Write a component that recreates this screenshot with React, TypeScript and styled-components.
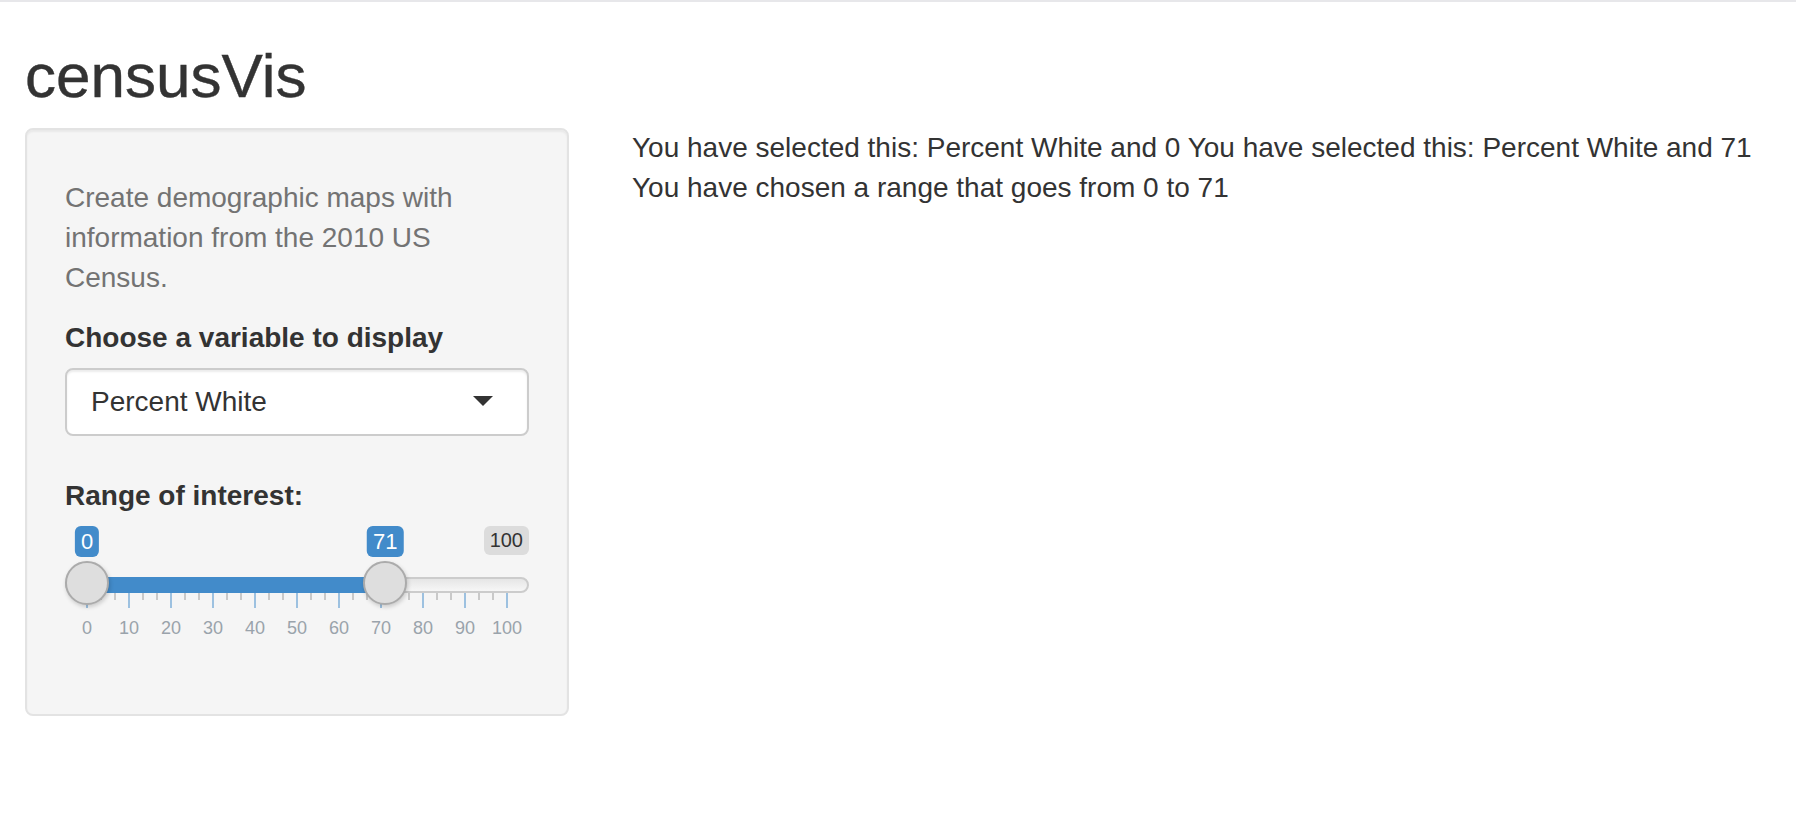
import React from "react";
import styled, { createGlobalStyle } from "styled-components";

const GlobalStyle = createGlobalStyle`
  html, body {
    margin: 0;
    padding: 0;
    background: #ffffff;
  }
  body {
    font-family: "Liberation Sans", Arial, Helvetica, sans-serif;
    color: #333333;
    font-size: 28px;
    line-height: 40px;
  }
  *, *::before, *::after {
    box-sizing: border-box;
  }
`;

const Page = styled.div`
  border-top: 2px solid #e7e7ea;
  padding: 0 30px 0 25px;
`;

const Title = styled.h2`
  margin: 41px 0 19px;
  font-size: 62px;
  font-weight: 500;
  line-height: 66px;
  color: #333333;
  -webkit-text-stroke: 0.4px #333333;
`;

const Layout = styled.div`
  display: flex;
  align-items: flex-start;
`;

const Sidebar = styled.div`
  flex: none;
  display: flex;
  flex-direction: column;
  width: 544px;
  padding: 38px;
  background: #f5f5f5;
  border: 2px solid #e3e3e3;
  border-radius: 8px;
  box-shadow: inset 0 2px 2px rgba(0, 0, 0, 0.05);
`;

const Main = styled.div`
  flex: 1;
  display: flex;
  flex-direction: column;
  padding-left: 63px;
`;

const HelpText = styled.p`
  margin: 10px 0 20px;
  color: #737373;
`;

const FormGroup = styled.div<{ $gap: number }>`
  display: flex;
  flex-direction: column;
  margin-bottom: ${(p) => p.$gap}px;
`;

const Label = styled.label`
  font-weight: 700;
  margin-bottom: 10px;
`;

const SelectBox = styled.div`
  position: relative;
  height: 68px;
  padding: 12px 24px;
  background: #ffffff;
  border: 2px solid #cccccc;
  border-radius: 8px;
  box-shadow: inset 0 2px 2px rgba(0, 0, 0, 0.075);
  line-height: 40px;
  color: #333333;

  &::after {
    content: "";
    position: absolute;
    right: 34px;
    top: 50%;
    margin-top: -6px;
    width: 0;
    height: 0;
    border-style: solid;
    border-width: 10px 10px 0 10px;
    border-color: #333333 transparent transparent transparent;
  }
`;

/* ---------- range slider ---------- */

const Slider = styled.div`
  display: flex;
  flex-direction: column;
  padding-bottom: 39px;
`;

const TagRow = styled.div`
  position: relative;
  display: flex;
  justify-content: flex-end;
  align-items: flex-start;
  height: 35px;
`;

const ValueTag = styled.span`
  position: absolute;
  top: 0;
  transform: translateX(-50%);
  padding: 2px 6px;
  font-size: 22px;
  line-height: 27px;
  color: #ffffff;
  background: #428bca;
  border-radius: 6px;
  white-space: nowrap;
`;

const MaxTag = styled.span`
  padding: 2px 6px;
  font-size: 20px;
  line-height: 25px;
  color: #333333;
  background: rgba(0, 0, 0, 0.1);
  border-radius: 6px;
`;

const TrackArea = styled.div`
  position: relative;
  height: 31px;
`;

const Track = styled.div`
  position: absolute;
  left: 0;
  right: 0;
  top: 16px;
  height: 16px;
  border: 2px solid #cccccc;
  border-radius: 16px;
  background: linear-gradient(to bottom, #dddddd -50%, #ffffff 150%);
`;

const Bar = styled.div`
  position: absolute;
  top: 16px;
  height: 16px;
  background: #428bca;
`;

const Handle = styled.div`
  position: absolute;
  top: 0;
  z-index: 2;
  width: 44px;
  height: 44px;
  border-radius: 50%;
  background: #dedede;
  border: 2px solid #ababab;
  box-shadow: 1px 2px 4px rgba(0, 0, 0, 0.18);
`;

const Grid = styled.div`
  display: flex;
  justify-content: space-between;
  align-items: flex-start;
  height: 16px;
  padding: 0 21px;
`;

const Tick = styled.span<{ $major: boolean }>`
  flex: none;
  width: 2px;
  height: ${(p) => (p.$major ? 16 : 8)}px;
  background: ${(p) => (p.$major ? "#9dc1e0" : "#c9c9c9")};
`;

const GridLabels = styled.div`
  display: flex;
  margin: 11px 1px 0;
`;

const TickLabel = styled.span`
  flex: none;
  width: 42px;
  text-align: center;
  font-size: 18px;
  line-height: 18px;
  color: #9aa3ab;
  white-space: nowrap;
`;

const OutputText = styled.div`
  color: #333333;
  white-space: nowrap;
`;

const SLIDER_WIDTH = 464;
const HANDLE = 44;
const SPAN = SLIDER_WIDTH - HANDLE;
const MIN = 0;
const MAX = 100;
const FROM = 0;
const TO = 71;

const pos = (v: number) => ((v - MIN) / (MAX - MIN)) * SPAN;

function RangeSlider() {
  const majors = Array.from({ length: 11 }, (_, i) => MIN + i * 10);
  const ticks = Array.from({ length: 31 }, (_, i) => i % 3 === 0);
  return (
    <Slider>
      <TagRow>
        <ValueTag style={{ left: pos(FROM) + HANDLE / 2 }}>{FROM}</ValueTag>
        <ValueTag style={{ left: pos(TO) + HANDLE / 2 }}>{TO}</ValueTag>
        <MaxTag>{MAX}</MaxTag>
      </TagRow>
      <TrackArea>
        <Track />
        <Bar style={{ left: pos(FROM) + HANDLE / 2, width: pos(TO) - pos(FROM) }} />
        <Handle style={{ left: pos(FROM) }} />
        <Handle style={{ left: pos(TO) }} />
      </TrackArea>
      <Grid>
        {ticks.map((major, i) => (
          <Tick key={i} $major={major} />
        ))}
      </Grid>
      <GridLabels>
        {majors.map((v) => (
          <TickLabel key={v}>{v}</TickLabel>
        ))}
      </GridLabels>
    </Slider>
  );
}

export default function App() {
  return (
    <>
      <GlobalStyle />
      <Page>
        <Title>censusVis</Title>
        <Layout>
          <Sidebar>
            <HelpText>
              Create demographic maps with information from the 2010 US Census.
            </HelpText>
            <FormGroup $gap={40}>
              <Label>Choose a variable to display</Label>
              <SelectBox>Percent White</SelectBox>
            </FormGroup>
            <FormGroup $gap={0}>
              <Label>Range of interest:</Label>
              <RangeSlider />
            </FormGroup>
          </Sidebar>
          <Main>
            <OutputText>
              You have selected this: Percent White and 0 You have selected this: Percent White and 71
            </OutputText>
            <OutputText>You have chosen a range that goes from 0 to 71</OutputText>
          </Main>
        </Layout>
      </Page>
    </>
  );
}
